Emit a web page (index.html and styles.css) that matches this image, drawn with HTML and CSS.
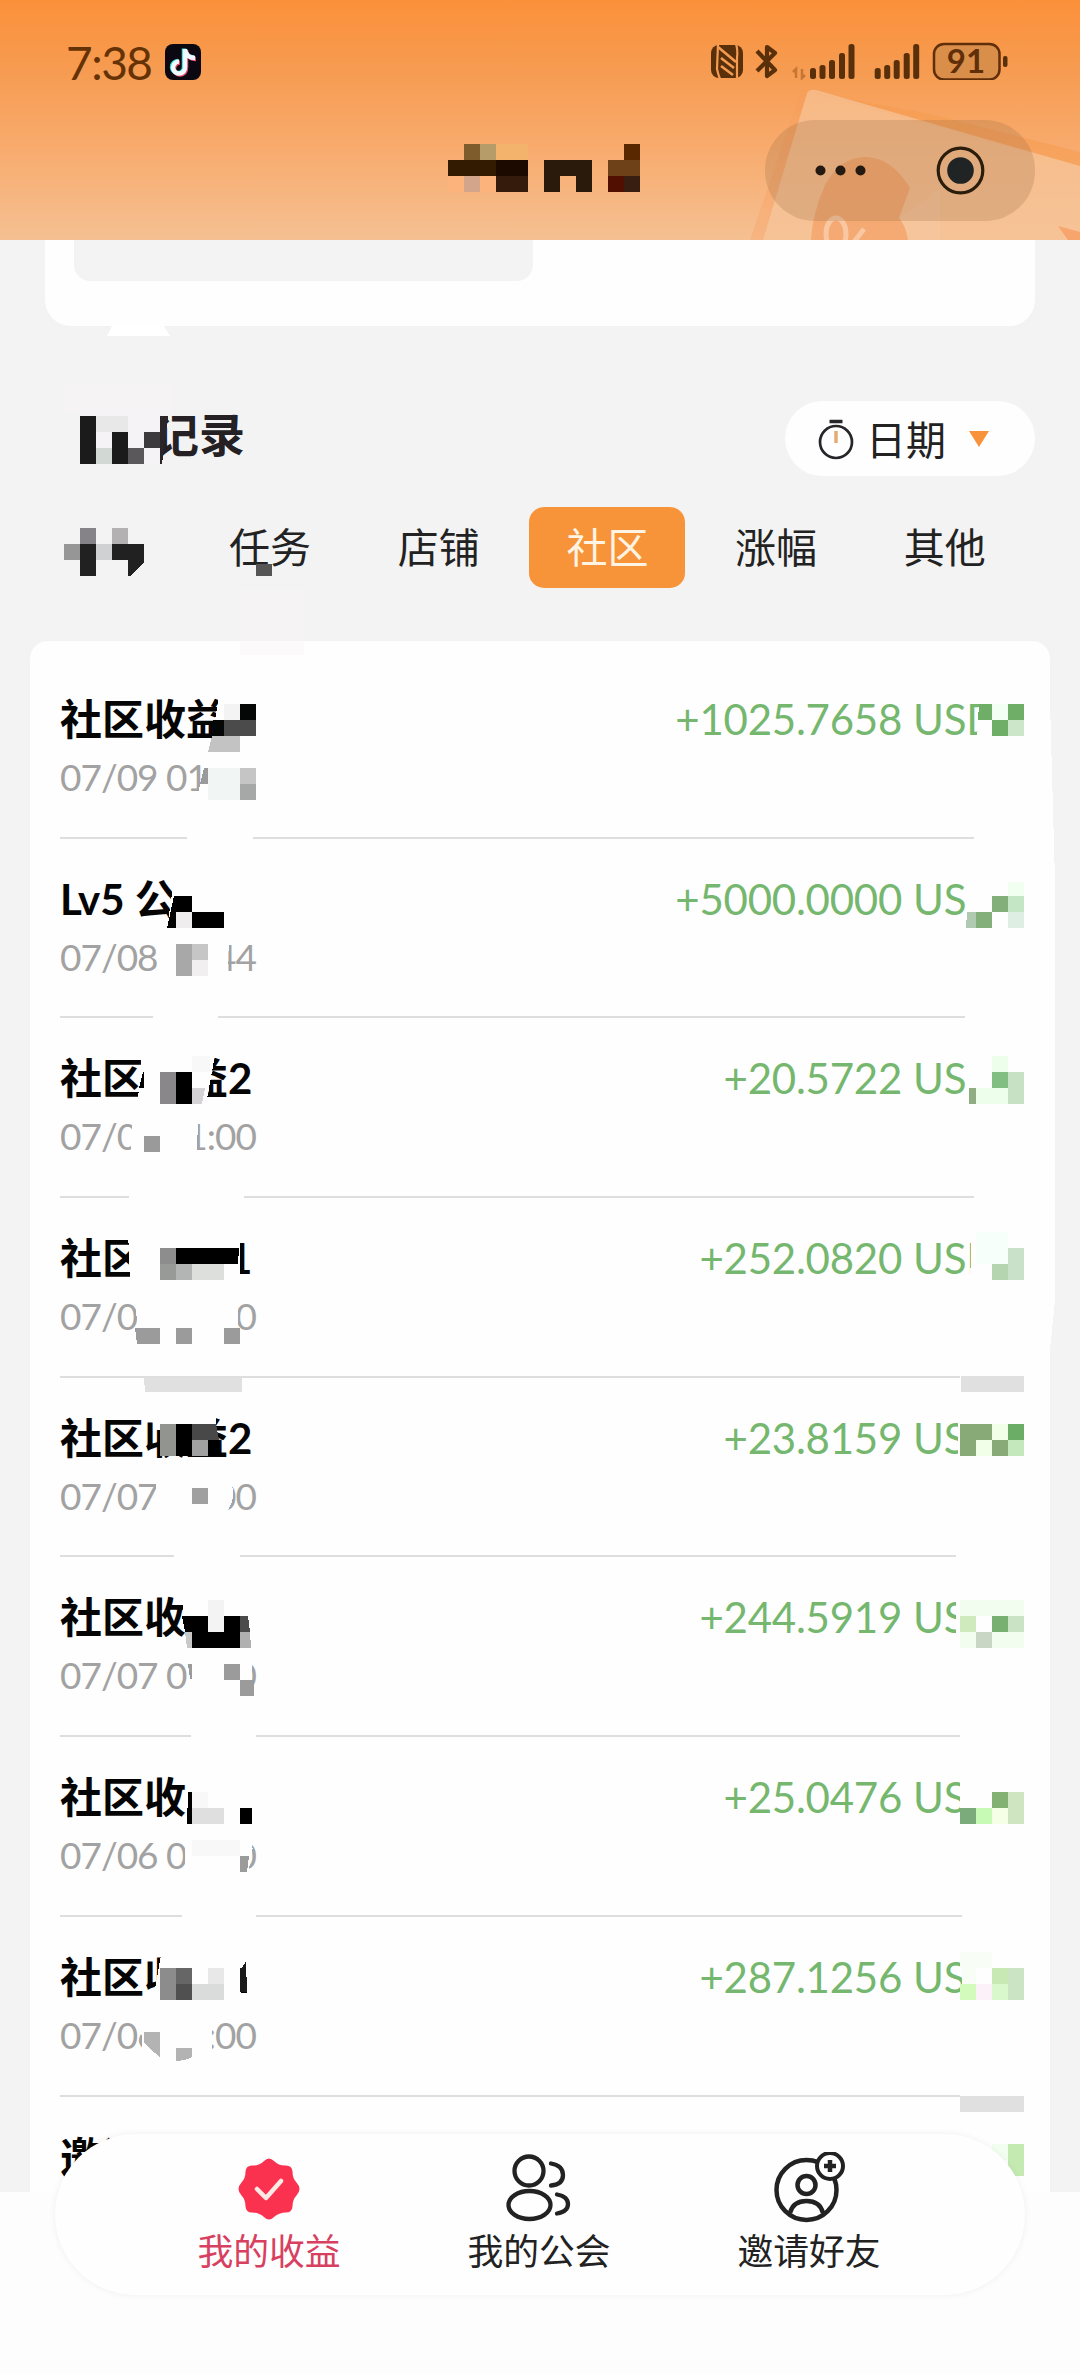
FILE: index.html
```html
<!DOCTYPE html>
<html lang="zh-CN">
<head>
<meta charset="utf-8">
<title>我的收益</title>
<link rel="stylesheet" href="styles.css">
</head>
<body>
<div class="page">
  <header class="header">
    <svg class="header-art" viewBox="0 0 400 240" width="400" height="240">
      <path d="M120 90L250 114L400 152V166L128 92Z" fill="#f69a4b" opacity=".5"/>
      <path d="M127 93Q129 89 136 90L400 166V240H83Z" fill="#f7c49a" opacity=".7"/>
      <path d="M120 94L127 93L83 240H70Z" fill="#f89a5c" opacity=".3"/>
      <path d="M131 240Q132 215 145 185Q160 157 186 157Q212 158 230 188L219 218Q226 226 228 240Z" fill="#f4a067" opacity=".75"/>
      <path d="M219 218L260 189V240H228Q226 226 219 218Z" fill="#f7c8a2" opacity=".5"/>
      <path d="M378 226L400 232V240H388Z" fill="#f7a56c"/>
      <g fill="none" stroke="#fbd0ae" stroke-width="5" opacity=".8"><ellipse cx="156" cy="234" rx="10" ry="16"/><path d="M184 229L174 242"/></g>
    </svg>
    <div class="status">
      <span class="clock">7:38</span>
      <svg class="app" viewBox="0 0 36 36" width="36" height="36">
        <rect width="36" height="36" rx="8" fill="#0c0812"/>
        <g fill="none" stroke-width="4.5"><path d="M20 5V23a6 6 0 1 1-6-5.500M20 6c1 5 5 8 10 8" stroke="#25d8d9" transform="translate(-1 -.5)"/><path d="M20 5V23a6 6 0 1 1-6-5.500M20 6c1 5 5 8 10 8" stroke="#e8446c" transform="translate(1 1)"/><path d="M20 5V23a6 6 0 1 1-6-5.500M20 6c1 5 5 8 10 8" stroke="#effaff"/></g>
      </svg>
      <svg class="sys" viewBox="0 0 300 40" width="300" height="40">
        <g fill="#5a300b">
          <rect x="3" y="5" width="32" height="33" rx="8"/>
          <path d="M10 4L9 29Q10 34 12 39M28 4Q30 10 29 18V39" stroke="#f49b50" stroke-width="2.200" fill="none"/>
          <path d="M10 7L28 22M13 18L26 28M13 26L25 35" stroke="#f49b50" stroke-width="2.600" fill="none"/>
          <path d="M49 11L67 30L59 36V7L67 13L49 31" fill="none" stroke="#5a300b" stroke-width="4.200" stroke-linejoin="round"/>
          <path d="M88 38V29L85 32M94 29V38L97 35" stroke="#c57635" stroke-width="2.500" fill="none"/>
          <g id="bars"><rect x="102" y="28" width="6" height="11" rx="2.500"/><rect x="111.500" y="25" width="6" height="14" rx="2.500"/><rect x="121" y="20" width="6" height="19" rx="2.500"/><rect x="131" y="13" width="6" height="26" rx="2.500"/><rect x="140.500" y="4" width="6" height="35" rx="2.500"/></g>
          <use href="#bars" x="64.700"/>
          <rect x="295" y="16" width="4.500" height="11" rx="2"/>
        </g>
        <rect x="226" y="4" width="65.500" height="35.500" rx="10" fill="#d98f4a" stroke="#612e0a" stroke-width="2.500"/>
        <text x="258" y="33" class="batt" text-anchor="middle">91</text>
      </svg>
    </div>
    <div class="capsule">
      <svg viewBox="0 0 270 101" width="270" height="101">
        <g fill="#241a12"><circle cx="55.500" cy="50.500" r="5"/><circle cx="75.500" cy="50.500" r="5"/><circle cx="95.500" cy="50.500" r="5"/></g>
        <circle cx="195.500" cy="50.500" r="22.300" fill="none" stroke="#2b1d0c" stroke-width="3.200"/><circle cx="195.500" cy="50.500" r="13.300" fill="#202425"/>
      </svg>
    </div>
  </header>
  <div class="stub"><div class="stub-field"></div></div>
  <div class="record-head">
    <h1>记录</h1>
    <button class="date">
      <svg viewBox="0 0 36 42" width="36" height="42"><circle cx="18" cy="24" r="16" fill="none" stroke="#26262a" stroke-width="2.700"/><path d="M11.500 3.500h13" stroke="#26262a" stroke-width="3.500"/><path d="M18 13v12" stroke="#e7ab71" stroke-width="3.500"/></svg>
      <span>日期</span>
      <svg class="tri" viewBox="0 0 20 16" width="20" height="16"><path d="M0 0h20L10 16z" fill="#f8933c"/></svg>
    </button>
  </div>
  <nav class="tabs"><span></span><span>任务</span><span>店铺</span><span class="on"><b>社区</b></span><span>涨幅</span><span>其他</span></nav>
  <main class="list">
    <div class="row"><div class="line"><strong>社区收益</strong><p>+1025.7658<i>USD</i></p></div><div class="time"><span>07/09 01</span></div></div>
    <div class="row"><div class="line"><strong>Lv5 公</strong><p>+5000.0000<i>US</i></p></div><div class="time"><span>07/08</span><span>44</span></div></div>
    <div class="row"><div class="line"><strong>社区收益2</strong><p>+20.5722<i>US</i></p></div><div class="time"><span>07/0</span><span>1:00</span></div></div>
    <div class="row"><div class="line"><strong>社区收益1</strong><p>+252.0820<i>USD</i></p></div><div class="time"><span>07/0</span><span>0</span></div></div>
    <div class="row"><div class="line"><strong>社区收益2</strong><p>+23.8159<i>US</i></p></div><div class="time"><span>07/07</span><span>00</span></div></div>
    <div class="row"><div class="line"><strong>社区收</strong><p>+244.5919<i>US</i></p></div><div class="time"><span>07/07 0</span><span>0</span></div></div>
    <div class="row"><div class="line"><strong>社区收</strong><p>+25.0476<i>US</i></p></div><div class="time"><span>07/06 0</span><span>0</span></div></div>
    <div class="row"><div class="line"><strong>社区收益1</strong><p>+287.1256<i>US</i></p></div><div class="time"><span>07/06</span><span>:00</span></div></div>
    <div class="row"><div class="line"><strong>邀请</strong></div></div>
  </main>
  <footer class="base"></footer>

  <!-- privacy mosaic over names, times and currency -->
  <svg class="mosaic" viewBox="0 0 1080 2374" width="1080" height="2374" shape-rendering="crispEdges">
    <path fill="#fff" d="M112 326h52l6 10h-63z"/>
    <path fill="#f8f4f7" d="M240 590h64v65h-64zM64 385h108v28H64z" opacity=".35"/>
    <!-- page title -->
    <path fill="#7e5c2c" d="M464 144h16v16h-16z"/><path fill="#b69c68" d="M480 144h16v16h-16z"/><path fill="#f3b36c" d="M496 144h32v16h-32z"/>
    <path fill="#321b00" d="M448 160h48v16h-48z"/><path fill="#1c0a00" d="M496 160h32v16h-32z"/><path fill="#341b0b" d="M496 176h32v16h-32z"/><path fill="#d3a68c" d="M464 176h16v16h-16z"/><path fill="#fdb47c" d="M448 176h16v16h-16zM480 176h16v16h-16z"/>
    <path fill="#2a1a0c" d="M544 160h48v32h-16v-16h-16v16h-16z"/><path fill="#5a2800" d="M624 144h16v16h-16z"/><path fill="#6e4118" d="M608 160h32v16h-32z"/><path fill="#500f00" d="M608 176h16v16h-16z"/><path fill="#381e10" d="M624 176h16v16h-16z"/>
    <!-- heading and first tab -->
    <path fill="#f6f3f6" d="M80 410h88l-6 54H80z"/><path fill="#1c1b1c" d="M80 416h16v48H80zM112 432h16v32h-16z"/><path fill="#e8e8e9" d="M96 416h32v16H96z"/><path fill="#d2d8d3" d="M96 448h16v16H96z"/><path fill="#5a585a" d="M128 448h16v16h-16z"/><path fill="#3c3a3d" d="M144 432h16v16h-16z"/><path fill="#2a2528" d="M160 416h8l-6 48h-2z"/>
    <path fill="#969696" d="M64 544h16v16H64z"/><path fill="#858387" d="M80 528h16v16H80z"/><path fill="#212122" d="M80 544h16v32H80zM112 544h32v19l-14 13h-2v-16h-16z"/><path fill="#d0d1d2" d="M96 544h16v16H96z"/><path fill="#b4b1b3" d="M112 528h16v16h-16z"/><path fill="#555" d="M256 564h16v12h-16z"/>
    <!-- gaps wiped through text and dividers -->
    <g fill="#fefefe">
      <path d="M220 690l-5 30v20h50v-50zM206 755h60v40h-68zM187 832h66v10h-66zM974 832h60v10h-60zM979 695h55v50h-57z"/>
      <path d="M174 880l-7 48h70v-48zM160 935h71l-3 19v26h-68zM153 1012h65v10h-65zM965 1012h70v10h-70z"/>
      <path d="M142 1055h73l-10 55h-68zM132 1115h66l-1 40h-66zM129 1192h115v10H129zM974 1192h60v10h-60z"/>
      <path d="M128 1230h112v52H130zM136 1294h102v42H137zM972 1230h60v52h-62zM960 1373h70v10h-70z"/>
      <path d="M154 1410h62v20h-63v25zM156 1475h71q12 18 1 35h-72zM174 1552h66v10h-66zM956 1552h70v10h-70zM958 1400h60v65h-60z"/>
      <path d="M182 1590h80v60h-76zM192 1656h60v42h-60zM191 1732h65v9h-65zM960 1732h70v9h-70zM956 1590h70v55h-70z"/>
      <path d="M187 1775h80v60h-80zM185 1835h65q6 14-2 36h-63zM182 1911h74v9h-74zM962 1911h70v9h-70zM960 1770h70v60h-70z"/>
      <path d="M161 1955h86l-7 45h-87zM141 2020h71v30h-70zM962 1950h70v50h-70zM960 2092h70v10h-70z"/>
    </g>
    <!-- labels -->
    <path fill="#f3f3f3" d="M224 704h16v16h-16z"/><path fill="#050707" d="M240 704h16v16h-16zM213 720h11v16h-11z"/><path fill="#4b4b4b" d="M224 720h32v16h-32z"/><path fill="#c3c3c3" d="M212 736h28v16h-32z"/>
    <path fill="#f1f5f4" d="M208 768h32v32h-32z"/><path fill="#9a9a9a" d="M204 768h4v16h-8z"/><path fill="#c4c5c4" d="M240 768h16v16h-16z"/><path fill="#a6a8a7" d="M240 784h16v16h-16z"/>
    <path d="M174 896h18v16h32v16h-32v-16h-16v16h-9z"/><path fill="#efedee" d="M176 912h16v16h-16z"/><path fill="#a8a8a8" d="M176 944h16v32h-16z"/><path fill="#c6c6c6" d="M192 944h16v16h-16z"/><path fill="#f2eff1" d="M192 960h16v16h-16z"/>
    <path d="M143 1072h1v16h-5zM176 1072h16v32h-16z"/><path fill="#f8f8f8" d="M192 1056h18v16h-18z"/><path fill="#898789" d="M160 1072h16v32h-16z"/><path fill="#d5d3d5" d="M192 1088h13l-3 16h-10z"/><path fill="#9a9a9a" d="M144 1136h16v16h-16z"/>
    <path d="M176 1248h63l-1 16h-62z"/><path fill="#8d8d8d" d="M160 1248h16v16h-16z"/><path fill="#979a97" d="M160 1264h16v16h-16z"/><path fill="#b2b5b3" d="M176 1264h16v16h-16z"/><path fill="#dddfdd" d="M192 1264h32v16h-32z"/><path fill="#9b9b9b" d="M135 1328h25v16h-23zM176 1328h16v16h-16zM224 1328h16v16h-16z"/><path fill="#e0e0e0" d="M144 1377h98v15h-97zM961 1376h63v16h-63zM960 2096h64v16h-64z"/>
    <path fill="#92948f" d="M160 1424h16v32h-16z"/><path d="M176 1424h16v32h-16zM208 1440h11l2 16h-13z"/><path fill="#484848" d="M192 1424h24l3 16h-27z"/><path fill="#a0a0a0" d="M192 1440h16v16h-16zM192 1488h16v16h-16z"/>
    <path d="M182 1616h26v16h16v-16h16v32h-48v-16h-7z"/><path fill="#f3f3f3" d="M208 1600h16v32h-16z"/><path fill="#4a4a4a" d="M240 1616h8l2 16h-10z"/><path fill="#c8c8c8" d="M185 1632h7v16h-5z"/><path fill="#b0b0b0" d="M240 1632h10l1 16h-11z"/><path fill="#9b9b9b" d="M188 1664h4v15h-2zM224 1664h16v16h-16zM240 1680h14v16h-14zM240 1856h9l-2 16h-7z"/>
    <path d="M188 1792h4v32h-5zM240 1808h12v16h-12z"/><path fill="#dfdfdf" d="M192 1808h32v16h-32z"/><path fill="#f8f8f8" d="M192 1792h16v16h-16zM192 1840h48v16h-48z"/>
    <path fill="#8c8c8c" d="M160 1968h16v32h-16z"/><path fill="#666" d="M176 1968h16v16h-16z"/><path fill="#505050" d="M176 1984h16v16h-16z"/><path fill="#e8e8e8" d="M208 1968h16v16h-16z"/><path fill="#dadcdb" d="M192 1984h32v16h-32z"/><path fill="#1b1b1b" d="M240 1968h2l4-7 1 31h-7z"/><path fill="#b3b3b3" d="M144 2032h16v25l-11-9-5-6zM176 2048h16v9q-8 4-16 4z"/>
    <path fill="#fefefe" d="M247 1960h8v34h-8z"/>
    <!-- currency -->
    <path fill="#6fae66" d="M979 704h13v16h-14zM1008 704h16v16h-16zM992 720h16v16h-16z"/><path fill="#cce6ca" d="M1008 720h16v16h-16z"/><path fill="#f2fff3" d="M992 704h16v16h-16z"/>
    <path fill="#82af7a" d="M992 896h16v16h-16v16h-16v-16h16z"/><path fill="#c5e6c5" d="M1008 896h16v16h-16z"/><path fill="#deeee2" d="M1008 912h16v16h-16z"/><path fill="#afcab0" d="M967 912h9v16h-10z"/><path fill="#f0fff0" d="M1008 882h16v14h-16z"/>
    <path fill="#82be82" d="M992 1072h16v16h-16z"/><path fill="#c6e1c4" d="M1008 1072h16v32h-16z"/><path fill="#8fac82" d="M969 1088h7v16h-7z"/><path fill="#edffea" d="M976 1088h32v16h-32zM992 1056h16v16h-16z"/>
    <path fill="#f6fff9" d="M976 1232h32v32h-32z"/><path fill="#c9e1c9" d="M1008 1248h16v32h-16z"/><path fill="#b5d5b0" d="M992 1264h16v16h-16z"/>
    <path fill="#87aa77" d="M960 1424h32v16h-16v16h-16zM992 1440h16v16h-16z"/><path fill="#f2ffe8" d="M992 1424h16v16h-16zM976 1440h16v16h-16z"/><path fill="#6bad66" d="M1008 1424h16v16h-16z"/><path fill="#c4e8bc" d="M1008 1440h16v16h-16z"/>
    <path fill="#f2fcef" d="M960 1600h64v16h-64zM960 1632h64v16h-64z"/><path fill="#cfebbd" d="M960 1616h16v16h-16z"/><path fill="#77b071" d="M992 1616h16v16h-16z"/><path fill="#cbe3c5" d="M1008 1616h16v16h-16z"/><path fill="#c9d6c6" d="M976 1632h16v16h-16z"/>
    <path fill="#83b173" d="M992 1792h16v16h-16z"/><path fill="#cfe4c0" d="M1008 1792h16v32h-16z"/><path fill="#7bab7b" d="M960 1808h16v16h-16z"/><path fill="#c7fbb5" d="M976 1808h16v16h-16z"/><path fill="#f4ffe6" d="M992 1808h16v16h-16z"/>
    <path fill="#f8fdf6" d="M960 1952h32v16h-32zM962 1968h14v16h-14z"/><path fill="#c8e9b3" d="M992 1968h16v16h-16z"/><path fill="#cbe4c3" d="M1008 1968h16v32h-16z"/><path fill="#d3fcbc" d="M960 1984h16v16h-16z"/><path fill="#fcf1f9" d="M976 1984h16v16h-16z"/><path fill="#d9f9cc" d="M992 1984h16v16h-16z"/>
    <path fill="#f2fff0" d="M992 2144h16v16h-16z"/><path fill="#c4eab2" d="M1008 2144h16v32h-16z"/>
    <!-- uneven right edge of the card -->
    <path fill="#fefefe" d="M1050 700l5 180v420l-5 50z"/>
  </svg>

  <nav class="dock">
    <a class="item sel">
      <svg viewBox="0 0 72 76" width="72" height="76"><path d="M31 9q5-5 10 0 5 5 12 4.500 6 0 6.500 6 0 7 4 11 6 6.500 0 13-4 4-4 11-.5 6-6.500 6-7 0-12 4.500-5 5-10 0-5-4.500-12-4.500-6 0-6.500-6 0-7-4-11-6-6.500 0-13 4-4 4-11 .5-6 6.500-6Q26 14 31 9z" fill="#fb3150"/><path d="M24 37l9 9 15-17" fill="none" stroke="#ffe9e5" stroke-width="4.500" stroke-linecap="round" stroke-linejoin="round"/></svg>
      我的收益</a>
    <a class="item">
      <svg viewBox="0 0 72 76" width="72" height="76" fill="none" stroke="#222" stroke-width="4.300" stroke-linecap="round"><circle cx="26" cy="19" r="14.500"/><ellipse cx="26.500" cy="53" rx="21" ry="14"/><path d="M48 11.500q12 2 12 11.500T48 33.500M54 42.500q11 2 11 9.500T54 61.500"/></svg>
      我的公会</a>
    <a class="item">
      <svg viewBox="0 0 72 76" width="72" height="76" fill="none" stroke="#222" stroke-width="4.500"><circle cx="33.500" cy="38" r="30"/><circle cx="33.500" cy="33" r="9"/><path d="M17 61Q20 49 33.500 49T50 61"/><circle cx="57" cy="14" r="13" fill="#fff" stroke-width="4"/><path d="M57 8v12M51 14h12"/></svg>
      邀请好友</a>
  </nav>
</div>
</body>
</html>
```
FILE: styles.css
```css
* { box-sizing: border-box; }
body { margin: 0; font-family: Lato, "Noto Sans CJK SC", sans-serif; color: #222; }
.page { position: relative; width: 1080px; height: 2374px; overflow: hidden; display: flex; flex-direction: column; background: #f3f3f3; }
.header { position: relative; flex: none; height: 240px; background: linear-gradient(#fc903a, #f69b50 28%, #f8aa6c 60%, #f5c092); }
.header-art { position: absolute; right: 0; top: 0; width: 400px; }
.status { position: relative; display: flex; align-items: flex-start; height: 90px; padding: 42px 0 0 66px; color: #653205; }
.clock { width: 99px; font-size: 46px; line-height: 42px; letter-spacing: -1.5px; }
.app { flex: none; margin-top: 2px; }
.sys { flex: none; margin: -2px 0 0 507px; }
.batt { font-family: Lato, sans-serif; font-size: 33px; font-weight: 700; fill: #612e0a; }
.capsule { position: relative; width: 270px; height: 101px; margin: 30px 0 0 765px; border-radius: 50px; background: rgba(145, 105, 65, .23); }
.capsule svg { display: block; }
.stub { flex: none; height: 86px; margin: 0 45px; padding: 0 29px; border-radius: 0 0 26px 26px; background: #fefefe; }
.stub-field { width: 459px; height: 41px; border-radius: 0 0 16px 16px; background: #f3f3f3; }
.record-head { flex: none; display: flex; justify-content: space-between; align-items: flex-start; height: 75px; margin: 75px 45px 0 153px; }
h1 { margin: 0; font-size: 46px; line-height: 68px; font-weight: 700; color: #242024; }
.date { display: flex; align-items: center; width: 250px; height: 75px; padding: 0 0 0 33px; border: 0; border-radius: 38px; background: #fefefe; font: 40px/75px "Noto Sans CJK SC", sans-serif; color: #222; }
.date span { width: 102px; padding-left: 12px; line-height: 73px; white-space: nowrap; text-align: left; }
.date svg { flex: none; }
.date .tri { margin-left: 13px; }
.tabs { flex: none; display: grid; grid-template-columns: repeat(6, 168.7px); height: 81px; margin: 31px 0 0 17px; font-size: 41px; line-height: 81px; text-align: center; }
.on b { display: block; width: 156px; height: 81px; margin: 0 auto; border-radius: 15px; background: #f7943a; color: #fff4e3; font-weight: 400; }
.list { flex: none; height: 1551px; margin: 53px 30px 0; padding: 18px 26px 0 30px; overflow: hidden; border-radius: 18px 18px 0 0; background: #fefefe; }
.row { height: 179.7px; padding-top: 31px; border-bottom: 2px solid #dedede; }
.line { display: flex; justify-content: space-between; height: 59px; line-height: 58px; font-size: 42px; }
.line strong { color: #050505; white-space: pre; }
.line p { display: flex; margin: 0; color: #75b76e; letter-spacing: -.25px; }
.line i { width: 111px; margin-left: 11px; font-style: normal; }
.time { display: flex; justify-content: space-between; width: 196px; height: 58px; font-size: 37px; line-height: 56px; color: #a2a2a2; letter-spacing: -1px; }
.base { flex: 1; background: #fdfdfd; }
.mosaic { position: absolute; left: 0; top: 0; }
.dock { position: absolute; left: 55px; top: 2134px; width: 970px; height: 161px; padding: 18px 81px 0 79px; display: grid; grid-template-columns: repeat(3, 270px); border-radius: 81px; background: #fefefe; box-shadow: 0 0 7px rgba(0, 0, 0, .06); }
.item { display: flex; flex-direction: column; align-items: center; font-size: 35.8px; line-height: 48px; color: #222; }
.sel { color: #d8405f; }
```
